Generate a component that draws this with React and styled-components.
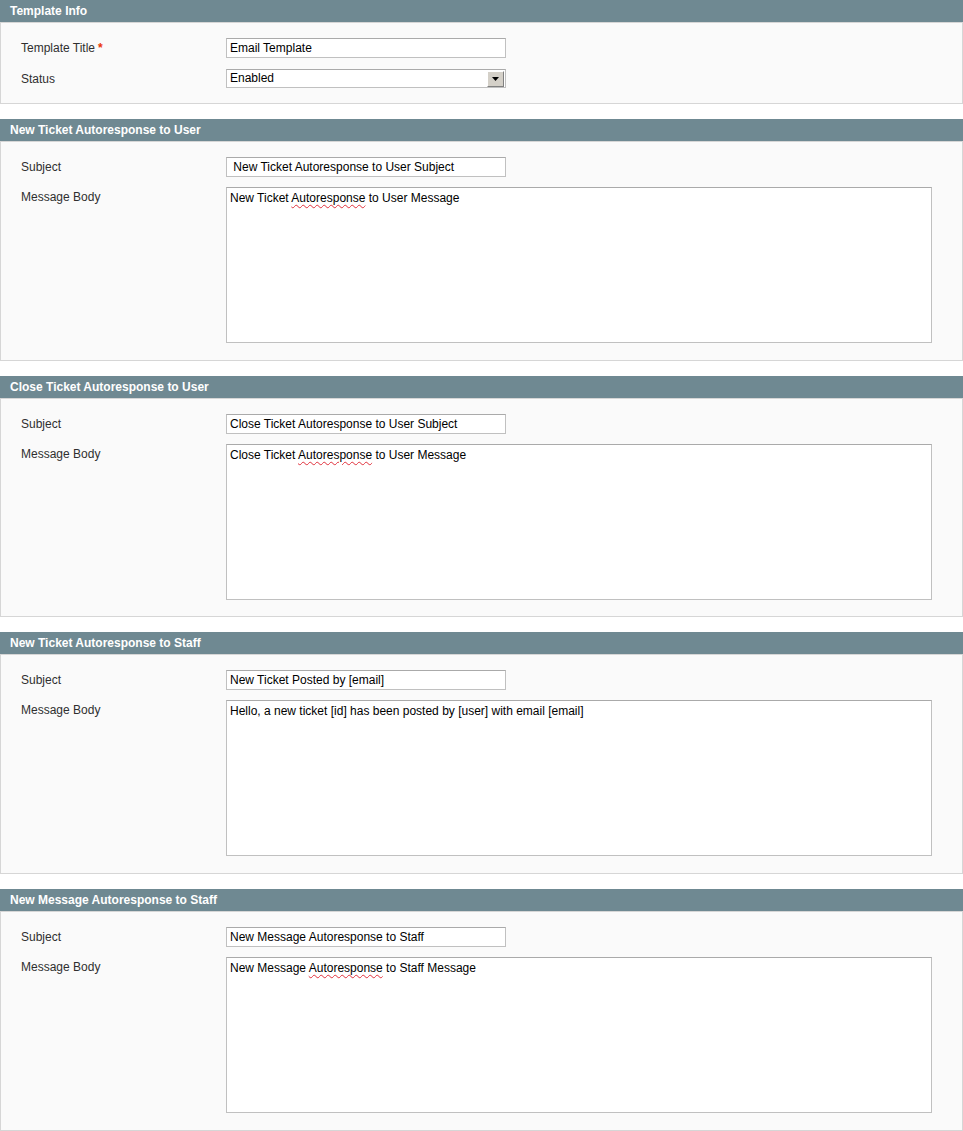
import React from "react";
import styled, { createGlobalStyle } from "styled-components";

const GlobalStyle = createGlobalStyle`
  body {
    margin: 0;
    background: #ffffff;
    font-family: "Liberation Sans", Arial, sans-serif;
  }
`;

const Page = styled.div`
  width: 963px;
  font-family: "Liberation Sans", Arial, sans-serif;
  font-size: 12px;
  color: #2f2f2f;
`;

const Section = styled.div`
  margin-bottom: 15px;
`;

const Head = styled.h4`
  margin: 0;
  height: 22px;
  line-height: 22px;
  padding-left: 10px;
  background: #6f8992;
  color: #ffffff;
  font-size: 12px;
  font-weight: bold;
`;

const Fieldset = styled.div`
  border: 1px solid #d6d6d6;
  background: #fafafa;
  padding: 15px 20px ${(p) => p.$pb || 16.7}px;
  display: grid;
  grid-template-columns: 205px 1fr;
  row-gap: ${(p) => p.$gap || 10}px;
  align-items: start;
`;

const Label = styled.label`
  padding-top: 3px;
  line-height: 14px;
  color: #2f2f2f;
`;

const Required = styled.span`
  color: #eb340a;
  font-weight: bold;
  margin-left: 3px;
`;

const Input = styled.div`
  box-sizing: border-box;
  width: 280px;
  height: 20px;
  border: 1px solid #c0c0c0;
  border-top-color: #aaaaaa;
  background: #ffffff;
  padding: 0 3px;
  line-height: 18px;
  color: #000;
  white-space: nowrap;
  overflow: hidden;
`;

const Select = styled(Input)`
  height: 19px;
  line-height: 17px;
  display: flex;
  justify-content: space-between;
  align-items: center;
  padding-right: 1px;
`;

const ArrowBtn = styled.span`
  box-sizing: border-box;
  width: 17px;
  height: 16px;
  background: #d4d0c8;
  border-top: 1px solid #ffffff;
  border-left: 1px solid #ffffff;
  border-right: 1px solid #808080;
  border-bottom: 1px solid #808080;
  display: flex;
  align-items: center;
  justify-content: center;
`;

const TextBox = styled.div`
  box-sizing: border-box;
  width: 706px;
  height: 156px;
  border: 1px solid #c0c0c0;
  border-top-color: #aaaaaa;
  background: #ffffff;
  padding: 3px 3px;
  line-height: 15px;
  color: #000;
`;

const Misspelt = styled.span`
  text-decoration: underline wavy #e0303b;
  text-decoration-thickness: 1px;
  text-underline-offset: 2px;
`;

const Arrow = () => (
  <svg width="7" height="4" viewBox="0 0 7 4">
    <polygon points="0,0 7,0 3.5,4" fill="#000" />
  </svg>
);

const Body = ({ before, word, after }) => (
  <TextBox>
    {before}
    {word && <Misspelt>{word}</Misspelt>}
    {after}
  </TextBox>
);

const sections = [
  {
    title: "New Ticket Autoresponse to User",
    subject: "\u00a0New Ticket Autoresponse to User Subject",
    body: { before: "New Ticket ", word: "Autoresponse", after: " to User Message" },
  },
  {
    title: "Close Ticket Autoresponse to User",
    subject: "Close Ticket Autoresponse to User Subject",
    body: { before: "Close Ticket ", word: "Autoresponse", after: " to User Message" },
  },
  {
    title: "New Ticket Autoresponse to Staff",
    subject: "New Ticket Posted by [email]",
    body: { before: "Hello, a new ticket [id] has been posted by [user] with email [email]" },
  },
  {
    title: "New Message Autoresponse to Staff",
    subject: "New Message Autoresponse to Staff",
    body: { before: "New Message ", word: "Autoresponse", after: " to Staff Message" },
  },
];

export default function App() {
  return (
    <>
      <GlobalStyle />
      <Page>
        <Section>
          <Head>Template Info</Head>
          <Fieldset $gap={11} $pb={15}>
            <Label>
              Template Title<Required>*</Required>
            </Label>
            <Input>Email Template</Input>
            <Label>Status</Label>
            <Select>
              <span>Enabled</span>
              <ArrowBtn>
                <Arrow />
              </ArrowBtn>
            </Select>
          </Fieldset>
        </Section>
        {sections.map((s) => (
          <Section key={s.title}>
            <Head>{s.title}</Head>
            <Fieldset>
              <Label>Subject</Label>
              <Input>{s.subject}</Input>
              <Label>Message Body</Label>
              <Body {...s.body} />
            </Fieldset>
          </Section>
        ))}
      </Page>
    </>
  );
}
